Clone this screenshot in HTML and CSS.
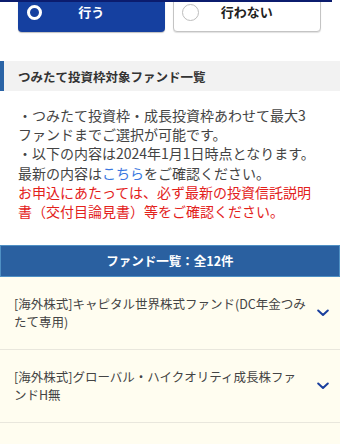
FILE: index.html
```html
<!DOCTYPE html>
<html lang="ja">
<head>
<meta charset="utf-8">
<link rel="stylesheet" href="styles.css">
</head>
<body>
<div class="topstrip"></div>
<div class="page">
  <div class="choices">
    <div class="choice choice-on">
      <span class="radio radio-on"></span>
      <span class="choice-label">行う</span>
    </div>
    <div class="choice choice-off">
      <span class="radio radio-off"></span>
      <span class="choice-label">行わない</span>
    </div>
  </div>

  <div class="section-head">つみたて投資枠対象ファンド一覧</div>

  <div class="notes">
    <p>・つみたて投資枠・成長投資枠あわせて最大3ファンドまでご選択が可能です。</p>
    <p>・以下の内容は2024年1月1日時点となります。最新の内容は<a class="link" href="#">こちら</a>をご確認ください。</p>
    <p class="warn">お申込にあたっては、必ず最新の投資信託説明書（交付目論見書）等をご確認ください。</p>
  </div>

  <div class="list-bar">ファンド一覧：全12件</div>

  <div class="funds">
    <div class="fund">
      <div class="fund-name">[海外株式]キャピタル世界株式ファンド(DC年金つみたて専用)</div>
      <svg class="chev" width="12" height="8" viewBox="0 0 12 8"><path d="M1.2 1.5 L6 6 L10.8 1.5" fill="none" stroke="#1a3f9e" stroke-width="2" stroke-linecap="round" stroke-linejoin="round"/></svg>
    </div>
    <div class="fund">
      <div class="fund-name">[海外株式]グローバル・ハイクオリティ成長株ファンドH無</div>
      <svg class="chev" width="12" height="8" viewBox="0 0 12 8"><path d="M1.2 1.5 L6 6 L10.8 1.5" fill="none" stroke="#1a3f9e" stroke-width="2" stroke-linecap="round" stroke-linejoin="round"/></svg>
    </div>
    <div class="fund fund-empty"></div>
  </div>
</div>
</body>
</html>
```

FILE: styles.css
```css
html, body {
  margin: 0;
  padding: 0;
  background: #ffffff;
  overflow: hidden;
}
body {
  font-family: "Noto Sans CJK JP", "Noto Sans", sans-serif;
  color: #333333;
}
.topstrip {
  position: absolute;
  left: 0;
  top: 0;
  width: 332px;
  height: 2px;
  background: #0b1c6e;
  z-index: 5;
}
.page {
  width: 340px;
  background: #ffffff;
}
.choices {
  display: flex;
  gap: 8px;
  margin: -8px 19px 0 18px;
}
.choice {
  flex: 1;
  height: 40px;
  box-sizing: border-box;
  border-radius: 4px;
  position: relative;
  display: flex;
  align-items: center;
  justify-content: center;
}
.choice-on {
  background: #1540a0;
  color: #ffffff;
  box-shadow: 0 1px 1px rgba(0,0,0,0.25);
}
.choice-off {
  background: #ffffff;
  border: 1px solid #c4c4c4;
  color: #222222;
  box-shadow: 0 1px 1px rgba(0,0,0,0.12);
}
.choice-label {
  font-size: 13px;
  font-weight: bold;
  line-height: 16px;
}
.radio {
  position: absolute;
  top: 50%;
  box-sizing: border-box;
  border-radius: 50%;
}
.radio-on {
  left: 9px;
  width: 15px;
  height: 15px;
  margin-top: -7.5px;
  border: 3px solid #ffffff;
}
.radio-off {
  left: 8px;
  width: 17px;
  height: 17px;
  margin-top: -8.5px;
  border: 1px solid #bdbdbd;
}
.section-head {
  margin-top: 29px;
  height: 30px;
  box-sizing: border-box;
  background: #f2f2f2;
  border-left: 4px solid #2b64a6;
  padding-left: 14px;
  font-size: 12.5px;
  font-weight: bold;
  line-height: 31px;
  color: #333333;
}
.notes {
  padding: 15px 22px 0 18px;
  font-size: 14px;
  line-height: 19.2px;
  color: #444444;
}
.notes p {
  margin: 0;
}
.link {
  color: #3a78e0;
  text-decoration: none;
}
.warn {
  color: #e3211b;
}
.list-bar {
  margin-top: 24px;
  height: 32px;
  box-sizing: border-box;
  background: #2a60a0;
  border: 1px solid #4f90c4;
  color: #ffffff;
  font-size: 12.5px;
  font-weight: bold;
  text-align: center;
  line-height: 30px;
}
.funds {
  background: #fffdf0;
}
.fund {
  display: flex;
  align-items: center;
  padding: 18px 11px 18px 14px;
  border-bottom: 1px solid #e9e7dd;
}
.fund-name {
  width: 294px;
  font-size: 12.5px;
  line-height: 18px;
  color: #444444;
}
.chev {
  margin-left: auto;
  display: block;
}
.fund-empty {
  height: 40px;
  border-bottom: none;
}
```
